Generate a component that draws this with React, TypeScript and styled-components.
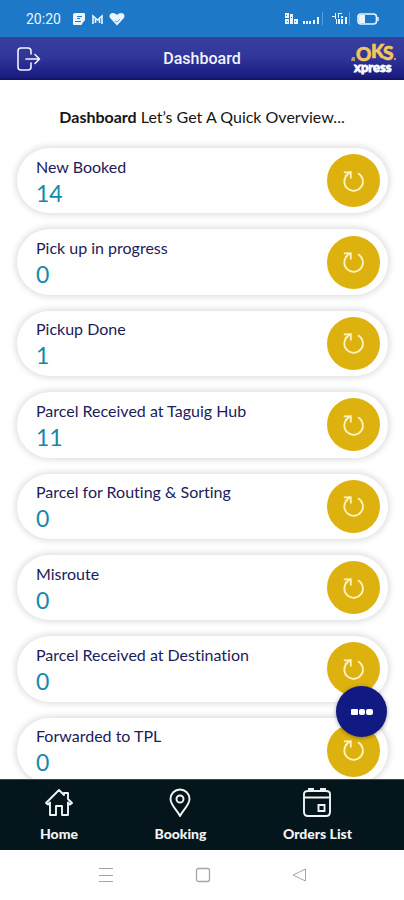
import React from "react";
import styled, { createGlobalStyle } from "styled-components";

const GlobalStyle = createGlobalStyle`
  *, *::before, *::after { box-sizing: border-box; }
  body { margin: 0; background: #fff; font-family: Lato, "Open Sans", sans-serif; font-variant-ligatures: none; }
  button { border: 0; padding: 0; background: none; font: inherit; color: inherit; cursor: pointer; }
  svg { display: block; }
`;

const Screen = styled.div`
  position: relative;
  height: 100vh;
  display: flex;
  flex-direction: column;
  overflow: hidden;
`;

const StatusBar = styled.div`
  height: 37px;
  flex: none;
  display: flex;
  align-items: center;
  justify-content: space-between;
  padding: 0 25px 0 26px;
  background: #1e78c8;
  color: #eaf5ff;
`;

const StatusGroup = styled.div<{ $gap: number }>`
  display: flex;
  align-items: center;
  gap: ${(p) => p.$gap}px;
`;

const Clock = styled.time`
  font: 400 14px/20px Roboto, sans-serif;
`;

const Header = styled.header`
  height: 43px;
  flex: none;
  display: grid;
  grid-template-columns: 64px 1fr 64px;
  align-items: center;
  background: linear-gradient(#383f9f 0%, #31379a 45%, #1c1d82 90%, #111365 100%);
  color: #f2f3ff;
`;

const Title = styled.h1`
  margin: 0;
  font: 500 16px/20px Roboto, sans-serif;
  text-align: center;
`;

const IconButton = styled.button`
  justify-self: start;
  padding-left: 17px;
`;

const Brand = styled.div`
  justify-self: end;
  padding-right: 6px;
`;

const Main = styled.main`
  flex: 1;
  min-height: 0;
  overflow-y: auto;
  scrollbar-width: none;
`;

const Intro = styled.p`
  margin: 0;
  height: 68px;
  padding-top: 26px;
  font-size: 16px;
  line-height: 22px;
  text-align: center;
  color: #151515;
`;

const List = styled.ul`
  list-style: none;
  margin: 0;
  padding: 0 16px 0 17px;
  min-height: calc(100% - 64px);
  display: grid;
  grid-auto-rows: 1fr;
  gap: 16px;
`;

const Card = styled.li`
  display: flex;
  align-items: center;
  justify-content: space-between;
  padding: 0 8px 0 19px;
  border-radius: 33px;
  background: #fff;
  box-shadow: 0 0 6px 2px rgba(0, 0, 0, 0.13);
`;

const Summary = styled.div`
  padding-top: 2px;
`;

const Label = styled.div`
  font-size: 16px;
  line-height: 22px;
  color: #211b5c;
`;

const Count = styled.div`
  font-size: 23px;
  line-height: 30px;
  color: #1489ad;
`;

const Refresh = styled.button`
  flex: none;
  width: 53px;
  height: 53px;
  display: grid;
  place-items: center;
  border-radius: 50%;
  background: #deb20e;
  color: #fff2bd;
`;

const MoreButton = styled.button`
  position: absolute;
  right: 17px;
  bottom: 163px;
  width: 51px;
  height: 51px;
  display: grid;
  place-items: center;
  border-radius: 50%;
  background: #111982;
  box-shadow: 0 1px 4px rgba(0, 0, 0, 0.35);
`;

const TabBar = styled.nav`
  height: 71px;
  flex: none;
  display: flex;
  justify-content: space-between;
  padding: 8px 52px 0 40px;
  background: #04161c;
  border-top: 1px solid #3b474b;
`;

const Tab = styled.a`
  display: flex;
  flex-direction: column;
  align-items: center;
  gap: 6px;
  color: #f1f4f4;
  text-decoration: none;
  font-size: 14px;
  line-height: 20px;
  font-weight: 900;
`;

const SystemBar = styled.div`
  height: 50px;
  flex: none;
  display: flex;
  align-items: center;
  justify-content: space-between;
  padding: 0 97px;
  background: #fff;
  color: #a5a5a5;
`;

const stats = [
  ["New Booked", 14],
  ["Pick up in progress", 0],
  ["Pickup Done", 1],
  ["Parcel Received at Taguig Hub", 11],
  ["Parcel for Routing & Sorting", 0],
  ["Misroute", 0],
  ["Parcel Received at Destination", 0],
  ["Forwarded to TPL", 0],
] as const;

const NotificationIcons = () => (
  <svg width="54" height="14" viewBox="0 0 54 14" fill="currentColor" aria-hidden="true">
    <path d="M4 1h9q1 0 1 1v6q0 1-1 1l-2 3q0 1-1 1H3q-1 0-1-1V3q0-2 2-2" />
    <path d="M6 4h5v1H6zM6 6h3v1H6zM4 9h6v1H4z" fill="#1e78c8" />
    <path d="M22 12V4l4.500 4L31 4v8M24.500 11V7M28.500 11V7" fill="none" stroke="currentColor" strokeWidth="1.600" />
    <path d="M46 13.500 40 7C37 4 39 1 42 1c2 0 3 1 4 2 1-1 2-2 4-2 3 0 5 3 2 6z" />
    <path d="m44 9 2 1 3-3" fill="none" stroke="#1e78c8" strokeWidth=".7" />
  </svg>
);

const SignalIcons = () => (
  <svg width="66" height="14" viewBox="0 0 66 14" fill="currentColor" aria-hidden="true">
    <path d="M1 1h4v5H1zM1 7h4v5H1zM6 2h3v10H6zM10 7h4v5h-4z" />
    <path d="M2 3h1v1H2zM3 9h1v1H3zM7 5h1v1H7zM11 9h1v1h-1z" fill="#1e78c8" />
    <path d="M19 9h2v3h-2zM22 9h2v3h-2zM25 9h2v3h-2zM29 8h2v4h-2zM33 5h2v7h-2z" />
    <path d="M38 0h1v13h-1zM65 0h1v13h-1z" opacity=".3" />
    <path d="M48 4h4v1h-4zM51 1h1v6h-1zM54 1h4v1h-4zM54 2h1v4h-1zM57 4h2v2h-2zM52 7h1v5h-1zM54 7h2v5h-2zM57 7h2v5h-2zM61 5h2v7h-2z" />
  </svg>
);

const BatteryIcon = () => (
  <svg width="22" height="12" viewBox="0 0 22 12" fill="none" aria-hidden="true">
    <rect x="1" y="1" width="18.500" height="10" rx="3" stroke="currentColor" strokeWidth="1.600" />
    <path d="M3 2h5v8H3q-1 0-1-2V4q0-2 1-2" fill="currentColor" />
    <path d="M21 4v4" stroke="currentColor" strokeWidth="1.500" />
  </svg>
);

const ExitIcon = () => (
  <svg width="24" height="24" viewBox="0 0 24 24" fill="none" stroke="currentColor" strokeWidth="1.600" strokeLinecap="round" strokeLinejoin="round" aria-hidden="true">
    <path d="M14 7V4q0-3-3-3H4Q1 1 1 4v16q0 3 3 3h7q3 0 3-3v-4M9 12h13M18 7.500 22.500 12 18 16.500" />
  </svg>
);

const Logo = () => (
  <svg width="48" height="38" viewBox="0 0 48 38" role="img" aria-label="OKS Xpress" fontFamily="Lato, sans-serif" fontWeight="900">
    <text x="6 21 33" y="21 18 20" fill="#f3c65b" stroke="#f3c65b" strokeWidth=".6" fontSize="19">OKS</text>
    <path d="M2 17h3v4H1zM44 18h2v2h-2z" fill="#b69970" />
    <text x="4" y="32" fill="#fff" stroke="#fff" strokeWidth=".8" fontSize="13">xpress</text>
  </svg>
);

const RefreshIcon = () => (
  <svg width="24" height="24" viewBox="0 0 24 24" fill="none" stroke="currentColor" strokeWidth="1.800" aria-hidden="true">
    <path d="M16 4.300A9.300 9.300 0 1 1 5.500 5.500M1.800 3.300l7-.2v6.500M3 7.500 8.500 3" />
  </svg>
);

const HomeIcon = () => (
  <svg width="28" height="30" viewBox="0 0 28 30" fill="none" stroke="currentColor" strokeWidth="1.900" strokeLinejoin="round" aria-hidden="true">
    <path d="m1 15 13-13 5 5V5h4v6l4 4-2 1.500-2-2V27h-6v-9h-6v9H5V14.500l-2 2z" />
  </svg>
);

const PinIcon = () => (
  <svg width="22" height="30" viewBox="0 0 22 30" fill="none" stroke="currentColor" strokeWidth="1.900" strokeLinejoin="round" aria-hidden="true">
    <path d="M11 28C8 22 1.500 17 1.500 11a9.500 9.500 0 0 1 19 0C20.500 17 14 22 11 28z" />
    <circle cx="11" cy="11" r="3.500" />
  </svg>
);

const CalendarIcon = () => (
  <svg width="28" height="30" viewBox="0 0 28 30" fill="none" stroke="currentColor" strokeWidth="1.900" aria-hidden="true">
    <path d="M6 3V1h4v2h8V1h4v2h1q4 0 4 3v18q0 4-4 4H5q-4 0-4-4V6q0-3 4-3zM1 9.500h26M15.500 17h6v6h-6z" />
    <path d="M6 3h4M18 3h4" />
  </svg>
);

const tabs = [
  ["Home", HomeIcon],
  ["Booking", PinIcon],
  ["Orders List", CalendarIcon],
] as const;

export default function App() {
  return (
    <Screen>
      <GlobalStyle />
      <StatusBar>
        <StatusGroup $gap={10}>
          <Clock>20:20</Clock>
          <NotificationIcons />
        </StatusGroup>
        <StatusGroup $gap={7}>
          <SignalIcons />
          <BatteryIcon />
        </StatusGroup>
      </StatusBar>
      <Header>
        <IconButton aria-label="Log out"><ExitIcon /></IconButton>
        <Title>Dashboard</Title>
        <Brand><Logo /></Brand>
      </Header>
      <Main>
        <Intro><strong>Dashboard</strong> Let’s Get A Quick Overview...</Intro>
        <List>
          {stats.map(([label, count]) => (
            <Card key={label}>
              <Summary>
                <Label>{label}</Label>
                <Count>{count}</Count>
              </Summary>
              <Refresh aria-label={`Refresh ${label}`}><RefreshIcon /></Refresh>
            </Card>
          ))}
        </List>
      </Main>
      <TabBar>
        {tabs.map(([label, Icon]) => (
          <Tab key={label} href="#"><Icon />{label}</Tab>
        ))}
      </TabBar>
      <SystemBar>
        <svg width="18" height="16" viewBox="0 0 18 16" stroke="currentColor" aria-hidden="true"><path d="M2 1.500h14M2 8.500h14M2 14.500h14" /></svg>
        <svg width="16" height="16" viewBox="0 0 16 16" fill="none" stroke="currentColor" strokeWidth="1.300" aria-hidden="true"><rect x="1.500" y="1.500" width="13" height="13" rx="2" /></svg>
        <svg width="16" height="16" viewBox="0 0 16 16" fill="none" stroke="currentColor" strokeLinejoin="round" aria-hidden="true"><path d="M14.500 2v12L2 8z" /></svg>
      </SystemBar>
      <MoreButton aria-label="More options">
        <svg width="24" height="8" viewBox="0 0 24 8" fill="#fff" aria-hidden="true">
          <rect x="1" y="1" width="7" height="6" rx="1" /><rect x="9" y="1" width="6" height="6" rx="2" /><rect x="16" y="1" width="7" height="6" rx="2" />
        </svg>
      </MoreButton>
    </Screen>
  );
}
